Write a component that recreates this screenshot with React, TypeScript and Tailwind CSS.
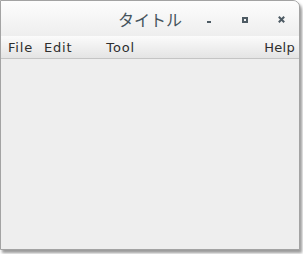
import React from "react";

export default function App() {
  return (
    <div className="w-[303px] h-[254px] bg-white">
      <div
        className="flex flex-col w-[300px] h-[250px] border border-[#a3a3a3] rounded-tr-[7px] bg-[#eeeeee] shadow-[2px_3px_3px_rgba(0,0,0,0.4)] overflow-hidden"
        style={{ fontFamily: '"DejaVu Sans", "Noto Sans CJK JP", sans-serif' }}
      >
        <div className="grid grid-cols-[1fr_auto_1fr] items-center h-[35px] bg-gradient-to-b from-[#fdfdfd] to-[#eeeeee]">
          <div />
          <div
            className="text-[16px] text-[#46545d] pt-[1px]"
            style={{ fontFamily: '"Noto Sans CJK JP", sans-serif' }}
          >
            タイトル
          </div>
          <div className="flex justify-end pt-[2px]">
            <div className="w-[36px] flex justify-center items-center h-[12px]">
              <div className="w-[4px] h-[2px] bg-[#4e5b64] mt-[5px]" />
            </div>
            <div className="w-[36px] flex justify-center items-center h-[12px]">
              <div className="w-[6px] h-[6px] border-2 border-[#4e5b64]" />
            </div>
            <div className="w-[36px] flex justify-center items-center h-[12px] pl-[1px]">
              <svg width="7" height="7" viewBox="0 0 7 7">
                <path d="M0.8 0.8 L6.2 6.2 M6.2 0.8 L0.8 6.2" stroke="#4e5b64" strokeWidth="2" />
              </svg>
            </div>
          </div>
        </div>
        <div className="flex items-center h-[23px] pt-[1px] bg-gradient-to-b from-[#fbfbfb] to-[#e4e4e4] border-b border-[#c4c4c4] text-[13px] text-[#2e2e2e] tracking-[0.8px]">
          <span className="ml-[7px]">File</span>
          <span className="ml-[11px]">Edit</span>
          <span className="ml-[34px]">Tool</span>
          <span className="ml-auto mr-[4px] tracking-[0.3px]">Help</span>
        </div>
        <div className="flex-1 bg-[#eeeeee]" />
      </div>
    </div>
  );
}
